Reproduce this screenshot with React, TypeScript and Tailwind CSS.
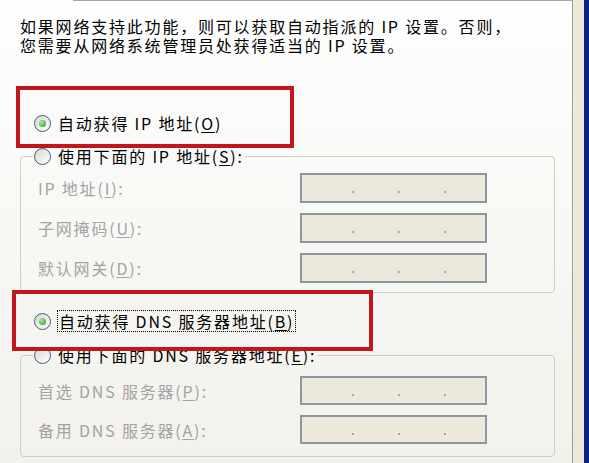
import React from "react";

const Radio = ({ checked }: { checked?: boolean }) => (
  <span className="w-[17px] h-[17px] shrink-0 rounded-full border border-[#3d5a78] bg-gradient-to-br from-[#d8d8d0] to-white flex items-center justify-center">
    {checked && (
      <span className="w-[7px] h-[7px] rounded-full bg-[radial-gradient(circle_at_35%_35%,#a8eaa8,#1f9a1f)]" />
    )}
  </span>
);

const Acc = ({ k }: { k: string }) => (
  <>
    (<span className="underline underline-offset-2">{k}</span>)
  </>
);

const IpBox = ({ h }: { h: string }) => (
  <div
    className={`w-[187px] ${h} border-2 border-[#8c97a3] bg-[#ece9dc] flex items-center pl-[50px] gap-[44px] pt-[8px]`}
  >
    <span className="w-[2px] h-[2px] bg-[#a8a8a8]" />
    <span className="w-[2px] h-[2px] bg-[#a8a8a8]" />
    <span className="w-[2px] h-[2px] bg-[#a8a8a8]" />
  </div>
);

export default function App() {
  return (
    <div className="w-[589px] h-[463px] overflow-hidden flex relative font-['Noto_Sans_CJK_SC','Noto_Sans',sans-serif] text-[16px] tracking-[1.8px] text-black">
      <div className="w-[573px] h-full border-r border-[#9aa2a6] bg-gradient-to-b from-[#fefefe] to-[#f2f1eb] flex flex-col">
        <div className="h-px ml-[73px] bg-[#a3a7aa]" />
        <div className="mt-[16px] pl-[20px] leading-[19px] whitespace-nowrap">
          <div>如果网络支持此功能，则可以获取自动指派的 IP 设置。否则，</div>
          <div>您需要从网络系统管理员处获得适当的 IP 设置。</div>
        </div>

        <div className="mt-[58px] ml-[34px] h-[20px] flex items-center gap-[7px] leading-[20px] whitespace-nowrap">
          <Radio checked />
          <span>
            自动获得 IP 地址<Acc k="O" />
          </span>
        </div>

        <fieldset className="mt-[13px] ml-[20px] w-[535px] border border-[#d0cfc6] rounded-[4px] pt-[7px] pb-[9px]">
          <legend className="ml-[12px] px-[1px] h-[20px] flex items-center gap-[7px] leading-[20px] whitespace-nowrap">
            <Radio />
            <span>
              使用下面的 IP 地址<Acc k="S" />:
            </span>
          </legend>
          <div className="flex flex-col gap-[10px]">
            {[
              ["IP 地址", "I"],
              ["子网掩码", "U"],
              ["默认网关", "D"],
            ].map(([t, k]) => (
              <div key={k} className="flex items-center">
                <span className="w-[279px] pl-[17px] text-[#a3a3a3] whitespace-nowrap">
                  {t}
                  <Acc k={k} />:
                </span>
                <IpBox h="h-[30px]" />
              </div>
            ))}
          </div>
        </fieldset>

        <div className="mt-[18px] ml-[34px] h-[20px] flex items-center gap-[6px] leading-[20px] whitespace-nowrap">
          <Radio checked />
          <span className="border border-dotted border-black px-[1px] leading-[20px]">
            自动获得 DNS 服务器地址<Acc k="B" />
          </span>
        </div>

        <fieldset className="mt-[14px] ml-[20px] w-[535px] border border-[#d0cfc6] rounded-[4px] pt-[11px] pb-[12px]">
          <legend className="ml-[12px] px-[1px] h-[20px] flex items-center gap-[7px] leading-[20px] whitespace-nowrap">
            <Radio />
            <span>
              使用下面的 DNS 服务器地址<Acc k="E" />:
            </span>
          </legend>
          <div className="flex flex-col gap-[10px]">
            {[
              ["首选 DNS 服务器", "P"],
              ["备用 DNS 服务器", "A"],
            ].map(([t, k]) => (
              <div key={k} className="flex items-center">
                <span className="w-[279px] pl-[17px] text-[#a3a3a3] whitespace-nowrap">
                  {t}
                  <Acc k={k} />:
                </span>
                <IpBox h="h-[29px]" />
              </div>
            ))}
          </div>
        </fieldset>
      </div>
      <div className="w-[11px] h-full bg-[#ece9d8]" />
      <div className="flex-1 h-full bg-[#0c2384]" />

      <div className="absolute left-[16px] top-[86px] w-[278px] h-[62px] border-[4px] border-[#c1161c]" />
      <div className="absolute left-[12px] top-[290px] w-[361px] h-[61px] border-[4px] border-[#c1161c]" />
    </div>
  );
}
